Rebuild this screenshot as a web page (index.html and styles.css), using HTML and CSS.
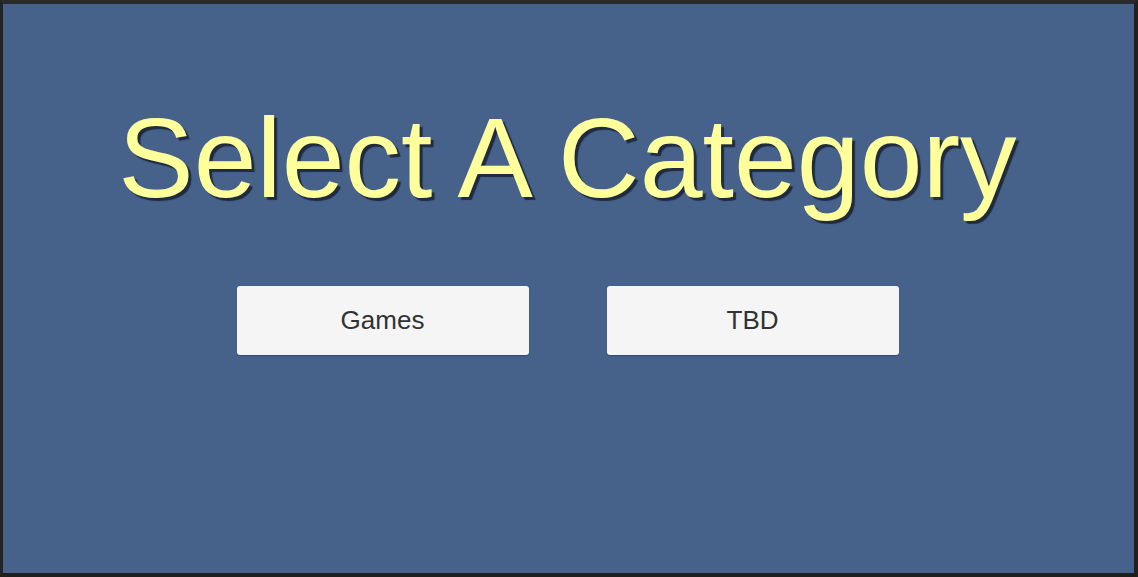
FILE: index.html
```html
<!DOCTYPE html>
<html>
<head>
<meta charset="utf-8">
<link rel="stylesheet" href="styles.css">
</head>
<body>
<div class="frame">
  <div class="screen">
    <h1 class="title">Select A Category</h1>
    <div class="buttons">
      <button class="btn">Games</button>
      <button class="btn">TBD</button>
    </div>
  </div>
</div>
</body>
</html>
```
FILE: styles.css
```css
html, body {
  margin: 0;
  padding: 0;
  background: #262626;
}
.frame {
  width: 1138px;
  height: 577px;
  box-sizing: border-box;
  border-style: solid;
  border-color: #2a2a2a #202020 #1e1e1e #232323;
  border-width: 4px 4px 4px 3px;
  background: #46628b;
}
.screen {
  height: 100%;
  display: flex;
  flex-direction: column;
  align-items: center;
  padding-top: 98px;
  padding-right: 2px;
  box-sizing: border-box;
}
.title {
  margin: 0;
  font-family: "Liberation Sans", Arial, sans-serif;
  font-weight: normal;
  font-size: 113px;
  line-height: 113px;
  color: #ffff9c;
  text-shadow: 3px 3px 1px #1f2a3e;
  white-space: nowrap;
}
.buttons {
  margin-top: 71px;
  display: flex;
  gap: 78px;
}
.btn {
  width: 292px;
  height: 69px;
  border: none;
  border-radius: 3px;
  background: #f5f5f5;
  color: #323232;
  font-family: "Liberation Sans", Arial, sans-serif;
  font-size: 26px;
  padding: 0;
  box-shadow: 0 1px 1px rgba(0,0,0,0.25);
}
```
